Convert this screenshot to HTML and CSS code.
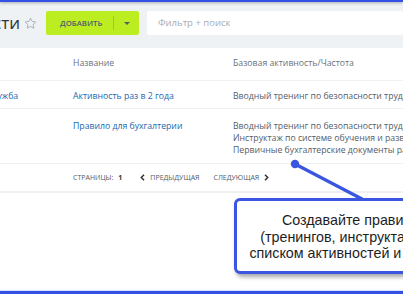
FILE: index.html
```html
<!DOCTYPE html>
<html lang="ru">
<head>
<meta charset="utf-8">
<link rel="stylesheet" href="styles.css">
</head>
<body>
<div class="page">
  <div class="frame-top"></div>
  <header class="toolbar">
    <div class="title-clip"><h1 class="title">Правила активности</h1></div>
    <svg class="star" viewBox="0 0 14 14" width="13" height="13"><path d="M7 1.2l1.75 3.6 3.95.55-2.87 2.76.7 3.93L7 10.16 3.47 12.04l.7-3.930L1.3 5.35l3.95-.55z" fill="none" stroke="#a9aeb5" stroke-width="1" stroke-linejoin="round"/></svg>
    <div class="btn-add">
      <span class="btn-main">Добавить</span>
      <span class="btn-sep"></span>
      <span class="btn-arrow"><span class="tri"></span></span>
    </div>
    <div class="search">Фильтр + поиск</div>
  </header>
  <main class="panel">
    <div class="grid">
      <div class="row head">
        <div class="cell">Служба</div>
        <div class="cell">Название</div>
        <div class="cell">Базовая активность/Частота</div>
      </div>
      <div class="row">
        <div class="cell link">Служба</div>
        <div class="cell link">Активность раз в 2 года</div>
        <div class="cell text">Вводный тренинг по безопасности труда / Раз в 2 года</div>
      </div>
      <div class="row">
        <div class="cell link"></div>
        <div class="cell link">Правило для бухгалтерии</div>
        <div class="cell text">
          <div>Вводный тренинг по безопасности труда / Раз в год</div>
          <div>Инструктаж по системе обучения и развития / Раз в год</div>
          <div>Первичные бухгалтерские документы раз в полгода</div>
        </div>
      </div>
    </div>
    <nav class="pager">
      <span class="pg-label">Страницы:</span><b class="pg-num">1</b>
      <span class="pg-link prev"><svg class="chev" viewBox="0 0 5 7" width="5" height="7"><path d="M4 0.8L1.3 3.5 4 6.2" fill="none" stroke="#333" stroke-width="1.5"/></svg>Предыдущая</span>
      <span class="pg-link next">Следующая<svg class="chev" viewBox="0 0 5 7" width="5" height="7"><path d="M1 0.8L3.7 3.5 1 6.2" fill="none" stroke="#333" stroke-width="1.5"/></svg></span>
    </nav>
    <div class="panel-rest"></div>
  </main>
  <div class="frame-bottom"></div>

  <svg class="pointer" width="403" height="294" viewBox="0 0 403 294">
    <line x1="295" y1="164" x2="362" y2="199" stroke="#3a56e0" stroke-width="3.2" stroke-linecap="round"/>
    <circle cx="295" cy="164" r="4.2" fill="#3a56e0"/>
  </svg>
  <div class="callout">
    <div>Создавайте правила для активности</div>
    <div>(тренингов, инструктажей, курсов) с гибким</div>
    <div>списком активностей и периодичностью сдачи</div>
  </div>
</div>
</body>
</html>
```
FILE: styles.css
```css
* { box-sizing: border-box; margin: 0; padding: 0; }
html, body { width: 403px; height: 294px; overflow: hidden; background: #fff; }
body { font-family: "Open Sans", "Liberation Sans", sans-serif; color: #535c69; }

.page {
  position: relative;
  width: 403px;
  height: 294px;
  display: flex;
  flex-direction: column;
  overflow: hidden;
}

.frame-top {
  height: 2px;
  background: #3451e6;
  box-shadow: 0 1px 3px rgba(0,0,0,0.35);
  position: relative;
  z-index: 2;
  flex-shrink: 0;
}

.toolbar {
  height: 46px;
  flex-shrink: 0;
  background: #eef2f4;
  display: flex;
  align-items: flex-start;
  padding-top: 9px;
}

.title-clip {
  width: 20px;
  overflow: hidden;
  display: flex;
  justify-content: flex-end;
  flex-shrink: 0;
  margin-top: 2px;
}
.title {
  flex-shrink: 0;
  white-space: nowrap;
  font-weight: 400;
  font-size: 17px;
  line-height: 20px;
  color: #333;
}

.star {
  margin: 6px 0 0 4px;
  flex-shrink: 0;
}

.btn-add {
  margin-left: 9px;
  width: 93px;
  height: 24px;
  background: #bbed21;
  border-radius: 2px;
  display: flex;
  align-items: center;
  flex-shrink: 0;
}
.btn-main {
  padding-left: 14px;
  width: 67px;
  font-size: 7.8px;
  font-weight: 600;
  text-transform: uppercase;
  color: #535c69;
  white-space: nowrap;
}
.btn-sep {
  width: 1px;
  height: 14px;
  background: rgba(83,92,105,0.25);
}
.btn-arrow {
  flex: 1;
  display: flex;
  justify-content: center;
  align-items: center;
}
.tri {
  width: 0; height: 0;
  border-left: 3px solid transparent;
  border-right: 3px solid transparent;
  border-top: 3px solid #535c69;
}

.search {
  margin-left: 8px;
  flex: 1;
  height: 24px;
  background: #fff;
  border-radius: 2px;
  padding-left: 11px;
  font-size: 9.5px;
  line-height: 24px;
  color: #a7acb3;
  white-space: nowrap;
}

.panel {
  flex: 1;
  display: flex;
  flex-direction: column;
  background: #fff;
}

.grid { margin-left: -13px; }
.row {
  display: grid;
  grid-template-columns: 86px 160px max-content;
  border-bottom: 1px solid #eef0f2;
  padding: 9px 0 6px;
  font-size: 8.7px;
  line-height: 12px;
  white-space: nowrap;
}
.row.head { padding: 9px 0 11px; color: #6a717b; }
.row.head .cell:first-child { visibility: hidden; }
.row:nth-child(3) { padding: 11px 0 7px; }
.link { color: #2067b0; }
.text { color: #535c69; }

.pager {
  display: flex;
  align-items: center;
  padding-left: 73px;
  height: 29px;
  border-bottom: 2px solid #eef0f2;
  font-size: 7px;
  font-weight: 400;
  text-transform: uppercase;
  color: #535c69;
  white-space: nowrap;
}
.pg-label { color: #535c69; }
.pg-num { margin-left: 5px; color: #333; font-weight: 700; }
.pg-link { display: flex; align-items: center; }
.prev { margin-left: 18px; }
.next { margin-left: 14px; }
.prev .chev { margin-right: 5px; }
.next .chev { margin-left: 5px; }

.panel-rest { flex: 1; }

.frame-bottom {
  height: 3px;
  background: #3451e6;
  flex-shrink: 0;
  box-shadow: 0 -1px 1px rgba(52,81,230,0.2);
}

.pointer { position: absolute; left: 0; top: 0; pointer-events: none; }

.callout {
  position: absolute;
  left: 234px;
  top: 198px;
  width: 340px;
  height: 76px;
  background: #fff;
  border: 3px solid #3a56e0;
  border-radius: 6px;
  box-shadow: 2px 3px 4px rgba(0,0,0,0.35);
  font-family: "Liberation Sans", Arial, sans-serif;
  font-size: 14.3px;
  line-height: 16.5px;
  color: #1e1e1e;
  text-align: center;
  padding-top: 11px;
  white-space: nowrap;
}
```
